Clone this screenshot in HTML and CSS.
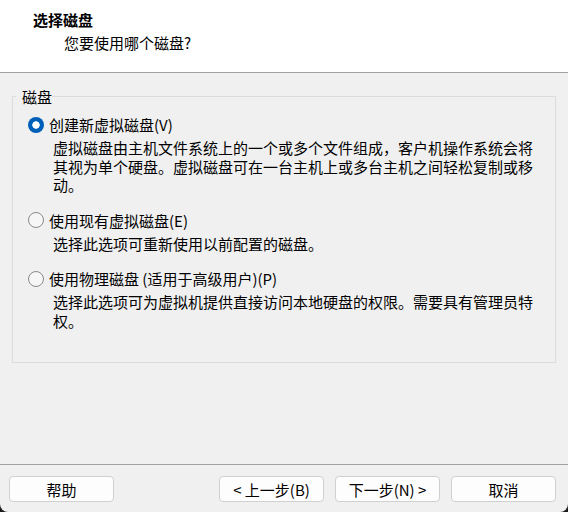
FILE: index.html
```html
<!DOCTYPE html>
<html lang="zh-CN">
<head>
<meta charset="utf-8">
<title>选择磁盘</title>
<link rel="stylesheet" href="styles.css">
</head>
<body>
<div class="dialog">
  <header class="header">
    <div class="title">选择磁盘</div>
    <div class="subtitle">您要使用哪个磁盘?</div>
  </header>

  <fieldset class="group">
    <legend class="legend">磁盘</legend>

    <div class="options">
      <div class="option">
        <div class="radio-row">
          <span class="radio checked"></span>
          <span class="label">创建新虚拟磁盘(V)</span>
        </div>
        <p class="desc">虚拟磁盘由主机文件系统上的一个或多个文件组成，客户机操作系统会将其视为单个硬盘。虚拟磁盘可在一台主机上或多台主机之间轻松复制或移动。</p>
      </div>

      <div class="option">
        <div class="radio-row">
          <span class="radio"></span>
          <span class="label">使用现有虚拟磁盘(E)</span>
        </div>
        <p class="desc">选择此选项可重新使用以前配置的磁盘。</p>
      </div>

      <div class="option">
        <div class="radio-row">
          <span class="radio"></span>
          <span class="label">使用物理磁盘 (适用于高级用户)(P)</span>
        </div>
        <p class="desc">选择此选项可为虚拟机提供直接访问本地硬盘的权限。需要具有管理员特权。</p>
      </div>
    </div>
  </fieldset>

  <footer class="footer">
    <button class="btn">帮助</button>
    <div class="nav">
      <button class="btn">&lt; 上一步(B)</button>
      <button class="btn">下一步(N) &gt;</button>
      <button class="btn">取消</button>
    </div>
  </footer>
</div>
</body>
</html>
```

FILE: styles.css
```css
html {
  background: #1c1c1c;
}
body {
  margin: 0;
  width: 568px;
  height: 512px;
  overflow: hidden;
  background: #f0f0f0;
  border-radius: 0 0 8px 8px;
  font-family: "Noto Sans CJK SC", "Noto Sans", sans-serif;
  font-size: 15px;
  line-height: 19px;
  color: #000;
}
.dialog {
  display: flex;
  flex-direction: column;
  height: 512px;
}
.header {
  height: 72px;
  box-sizing: content-box;
  background: #fff;
  border-bottom: 1px solid #a0a0a0;
  padding: 0 0 0 33px;
}
.title {
  font-weight: 700;
  padding-top: 10px;
}
.subtitle {
  margin-top: 4px;
  padding-left: 31px;
}
.group {
  margin: 14px 12px 0;
  padding: 0;
  height: 274px;
  border: 1px solid #dcdcdc;
  min-width: 0;
}
.legend {
  margin-left: 3px;
  padding: 0 0 0 6px;
}
.options {
  padding: 9px 0 0 15px;
}
.option {
  margin-bottom: 16px;
}
.radio-row {
  display: flex;
  align-items: center;
  height: 19px;
}
.radio {
  width: 16px;
  height: 16px;
  box-sizing: border-box;
  border-radius: 50%;
  border: 1px solid #8a8a8a;
  background: #f6f6f6;
  margin-right: 5px;
  flex: none;
}
.radio.checked {
  border: none;
  background: radial-gradient(circle, #ffffff 0 3.4px, #005fb8 4px);
}
.desc {
  margin: 5px 0 0 25px;
  width: 486px;
  line-height: 18.5px;
}
.footer {
  margin-top: auto;
  border-top: 1px solid #a0a0a0;
  padding: 11px 12px 10px 9px;
  display: flex;
  justify-content: space-between;
}
.nav {
  display: flex;
  gap: 11px;
}
.btn {
  width: 105px;
  height: 26px;
  box-sizing: border-box;
  border: 1px solid #d0d0d0;
  border-radius: 4px;
  background: #fdfdfd;
  font-family: "Noto Sans CJK SC", "Noto Sans", sans-serif;
  font-size: 15px;
  line-height: 19px;
  color: #000;
  padding: 0;
}
```
